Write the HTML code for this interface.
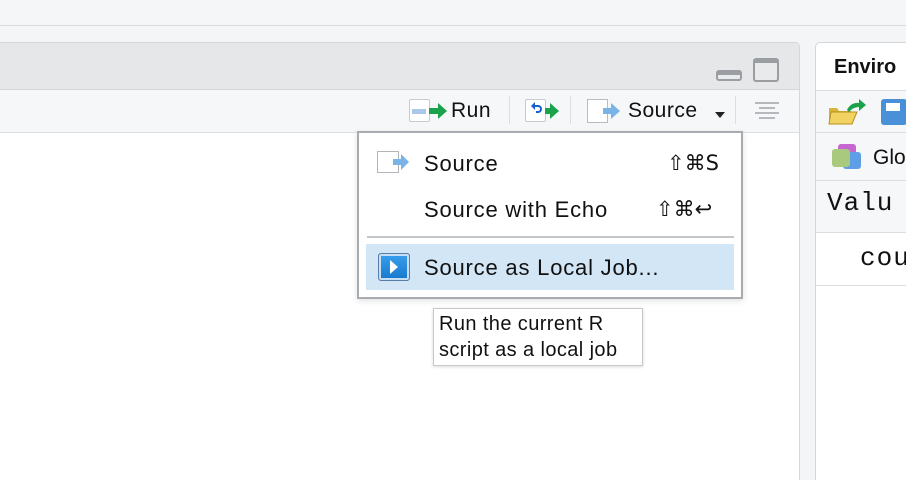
<!DOCTYPE html>
<html><head><style>
*{margin:0;padding:0;box-sizing:border-box}
html,body{width:906px;height:480px;overflow:hidden}
body{background:#f3f5f7;font-family:"Liberation Sans","DejaVu Sans",sans-serif;position:relative;color:#111}
.a{position:absolute}
</style></head><body>
<div class="a" style="left:0;top:0;width:906px;height:26px;background:#f4f6f8;border-bottom:1px solid #d8dbde"></div>
<!-- left pane -->
<div class="a" style="left:-5px;top:42px;width:805px;height:460px;border:1px solid #d4d7da;border-radius:5px;background:#fff;overflow:hidden">
 <div class="a" style="left:0;top:0;width:805px;height:47px;background:#e5e7e9;border-bottom:1px solid #d4d7da"></div>
 <div class="a" style="left:0;top:47px;width:805px;height:43px;background:#f5f7f9;border-bottom:1px solid #dcdfe2"></div>
</div>
<!-- min/max -->
<div class="a" style="left:716px;top:70px;width:26px;height:11px;border:2px solid #9a9ea2;border-top-width:5px;border-radius:3px;background:#e8eaec"></div>
<div class="a" style="left:753px;top:58px;width:26px;height:24px;border:2px solid #9a9ea2;border-top-width:5px;border-radius:3px;background:#e8eaec"></div>
<!-- toolbar -->
<div class="a" style="left:409px;top:99px;width:21px;height:23px;border:1px solid #c8ccd0;background:#fff;border-radius:2px"><div style="margin:9px 2px;height:5px;width:14px;background:#a9c8ea"></div></div>
<svg class="a" style="left:428px;top:101px" width="20" height="20"><path d="M1 7h9V2l9 8-9 8v-5H1z" fill="#1aa34a"/></svg>
<div class="a" style="left:451px;top:99px;font-size:21px;letter-spacing:.5px">Run</div>
<div class="a" style="left:509px;top:96px;width:1px;height:28px;background:#dcdfe2"></div>
<div class="a" style="left:525px;top:99px;width:21px;height:23px;border:1px solid #c8ccd0;background:#fff;border-radius:2px"></div>
<svg class="a" style="left:527px;top:101px" width="40" height="20"><path d="M4 5l4-4v3h3a4 4 0 010 8H9v-2h2a2 2 0 000-4H8v3z" fill="#1560d0"/><path d="M18 7h5V2l9 8-9 8v-5h-5z" fill="#1aa34a"/></svg>
<div class="a" style="left:570px;top:96px;width:1px;height:28px;background:#dcdfe2"></div>
<div class="a" style="left:587px;top:99px;width:21px;height:24px;border:1px solid #b8bcc0;background:#fff"></div>
<svg class="a" style="left:603px;top:101px" width="20" height="20"><path d="M0 7h8V2l9 8-9 8v-5H0z" fill="#7ab4e6"/></svg>
<div class="a" style="left:628px;top:99px;font-size:21px;letter-spacing:.5px">Source</div>
<svg class="a" style="left:715px;top:112px" width="10" height="6"><path d="M0 0h10L5 6z" fill="#222"/></svg>
<div class="a" style="left:735px;top:96px;width:1px;height:28px;background:#dcdfe2"></div>
<svg class="a" style="left:755px;top:101px" width="24" height="20" stroke="#a0a4a8" stroke-width="1.6"><path d="M0 2h24M4 7h16M0 12h24M4 17h16"/></svg>
<!-- right pane -->
<div class="a" style="left:815px;top:42px;width:100px;height:460px;border:1px solid #d4d7da;border-radius:5px;background:#fff;overflow:hidden">
 <div class="a" style="left:18px;top:13px;font-size:20px;font-weight:bold">Enviro</div>
 <div class="a" style="left:0;top:47px;width:100px;height:43px;background:#f5f7f9;border-top:1px solid #dcdfe2;border-bottom:1px solid #dcdfe2"></div>
 <div class="a" style="left:0;top:90px;width:100px;height:48px;background:#f5f7f9;border-bottom:1px solid #dcdfe2"></div>
 <div class="a" style="left:0;top:138px;width:100px;height:52px;background:#f5f7f9;border-bottom:1px solid #dcdfe2"></div>
 <div class="a" style="left:11px;top:145px;font:26px 'Liberation Mono','DejaVu Sans Mono',monospace;letter-spacing:1px">Valu</div>
 <div class="a" style="left:0;top:190px;width:100px;height:53px;border-bottom:1px solid #dcdfe2"></div>
 <div class="a" style="left:44px;top:200px;font:26px 'Liberation Mono','DejaVu Sans Mono',monospace;letter-spacing:1px">cou</div>
 <div class="a" style="left:57px;top:103px;font-size:21px">Glo</div>
</div>
<svg class="a" style="left:827px;top:98px" width="40" height="30"><path d="M2 10h8l2 3h12v13H2z" fill="#d9b43a"/><path d="M4 14h26l-5 12H2z" fill="#f2d260" stroke="#b89020"/><path d="M20 12q4-8 12-7V1l7 6-7 6V9q-6 0-10 5z" fill="#1aa34a"/></svg>
<div class="a" style="left:881px;top:99px;width:26px;height:26px;background:#4a90d8;border-radius:3px"><div style="margin:4px 5px;width:14px;height:8px;background:#fff"></div></div>
<div class="a" style="left:838px;top:144px;width:18px;height:18px;background:#c766d0;border-radius:3px"></div>
<div class="a" style="left:843px;top:152px;width:18px;height:17px;background:#5d9ee6;border-radius:3px"></div>
<div class="a" style="left:832px;top:149px;width:18px;height:18px;background:#a9c97e;border-radius:3px"></div>
<!-- menu -->
<div class="a" style="left:357px;top:131px;width:386px;height:168px;background:#fff;border:2px solid #a8acb0;box-shadow:0 2px 6px rgba(0,0,0,.12)"></div>
<div class="a" style="left:377px;top:151px;width:22px;height:22px;border:1px solid #b0b4b8;background:#fff"></div>
<svg class="a" style="left:393px;top:154px" width="20" height="16"><path d="M0 5h8V0l8 8-8 8v-5H0z" fill="#7ab4e6"/></svg>
<div class="a" style="left:424px;top:151px;font-size:22px;letter-spacing:.8px">Source</div>
<div class="a" style="left:667px;top:151px;font-size:21px;font-family:'DejaVu Sans',sans-serif">⇧⌘S</div>
<div class="a" style="left:424px;top:197px;font-size:22px;letter-spacing:.8px">Source with Echo</div>
<div class="a" style="left:656px;top:197px;font-size:21px;font-family:'DejaVu Sans',sans-serif">⇧⌘↩</div>
<div class="a" style="left:367px;top:236px;width:367px;height:2px;background:#c4c7ca"></div>
<div class="a" style="left:366px;top:244px;width:368px;height:46px;background:#d3e6f6"></div>
<div class="a" style="left:378px;top:253px;width:32px;height:28px;border:1px solid #5a7ea8;border-radius:3px;background:linear-gradient(#3aa0ee,#1677cc);box-shadow:inset 0 0 0 2px #c8def2"></div>
<svg class="a" style="left:389px;top:260px" width="10" height="14"><path d="M1 0l8 7-8 7z" fill="#fff"/></svg>
<div class="a" style="left:424px;top:255px;font-size:22px;letter-spacing:.8px">Source as Local Job...</div>
<!-- tooltip -->
<div class="a" style="left:433px;top:308px;width:210px;height:58px;background:#fff;border:1px solid #c8c8c8;box-shadow:0 1px 3px rgba(0,0,0,.15);font-size:20px;letter-spacing:.4px;line-height:26px;padding:2px 5px">Run the current R<br>script as a local job</div>
</body></html>
